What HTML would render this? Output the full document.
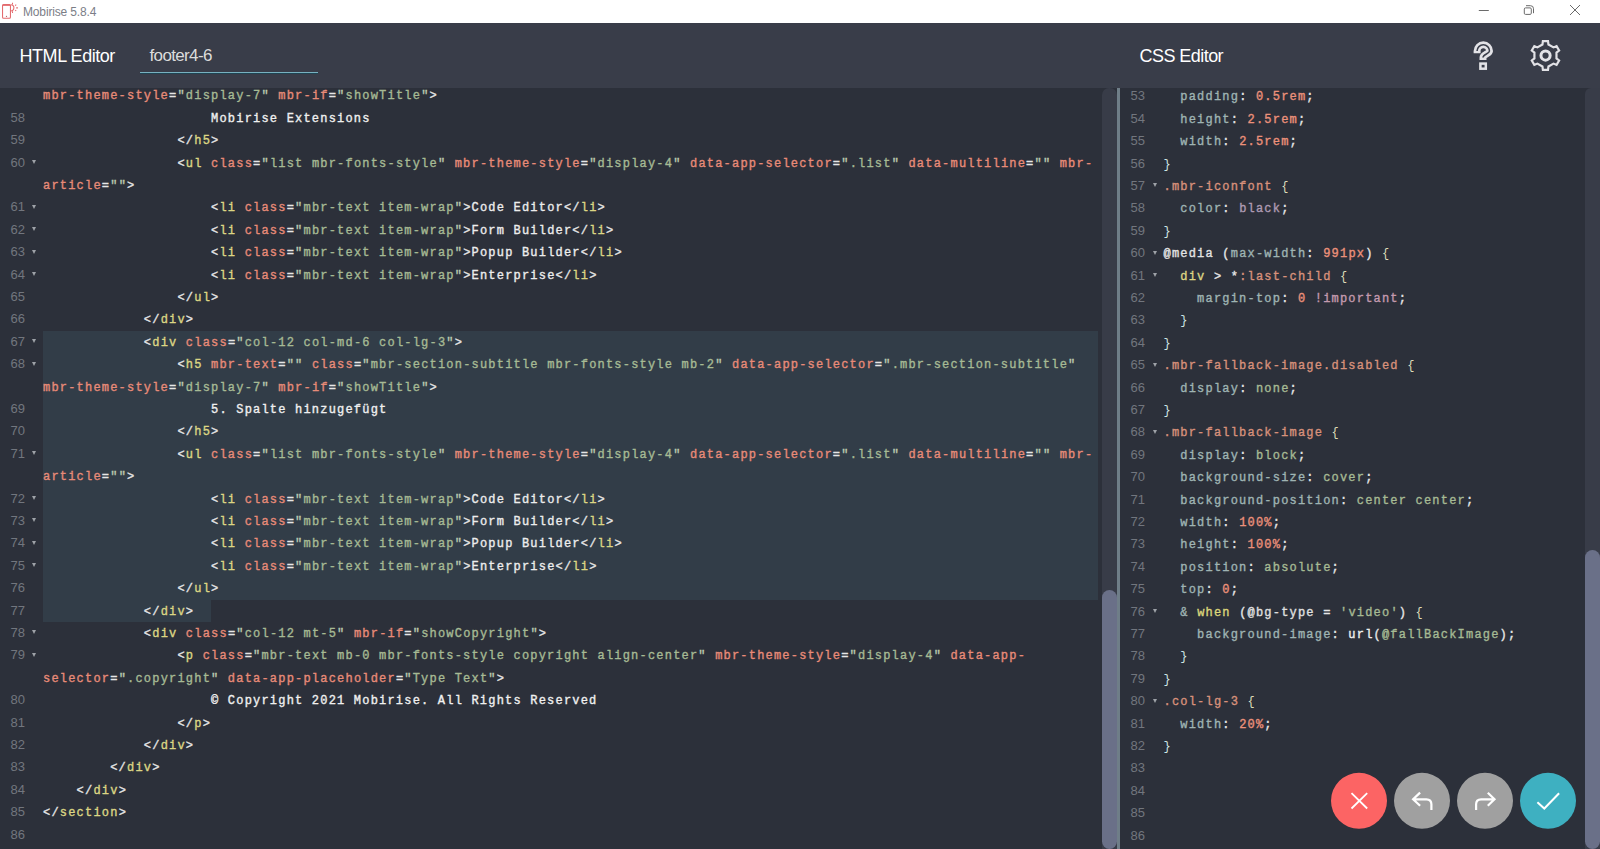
<!DOCTYPE html>
<html><head><meta charset="utf-8">
<style>
html,body{margin:0;padding:0;width:1600px;height:849px;overflow:hidden;background:#2c303a;}
body{position:relative;font-family:"Liberation Sans",sans-serif;}
.titlebar{position:absolute;left:0;top:0;width:1600px;height:23px;background:#fff;}
.titlebar .ttl{position:absolute;left:23px;top:4px;font-size:12px;letter-spacing:-0.15px;color:#7b7e87;line-height:16px;}
.header{position:absolute;left:0;top:23px;width:1600px;height:65px;background:#393d49;}
.htitle{position:absolute;color:#fff;font-size:18px;line-height:20px;}
.tabname{position:absolute;color:#dcdcdc;font-size:17px;line-height:20px;}
.tabline{position:absolute;left:140px;top:72px;width:178px;height:1px;background:#78b1c0;box-shadow:0 1px 0 rgba(25,70,85,0.8);}
.clip{position:absolute;top:88px;height:761px;overflow:hidden;}
.inner{position:absolute;top:-88px;left:0;width:1600px;height:849px;}
.row{position:absolute;margin-top:1px;height:22.4px;line-height:22.4px;white-space:pre;font-family:"Liberation Mono",monospace;font-size:12px;letter-spacing:1.2px;-webkit-text-stroke:0.35px currentColor;color:#e8e8e8;}
.ln{position:absolute;height:22.4px;line-height:22.4px;text-align:right;font-size:13px;color:#72767e;font-family:"Liberation Sans",sans-serif;}
.fold{position:absolute;width:0;height:0;border-left:2.6px solid transparent;border-right:2.6px solid transparent;border-top:4.2px solid #9ea2a8;}
.hl{position:absolute;background:#323d48;}
/* html tokens */
.p{color:#e6e6e6}
.t{color:#dcd684}
.a{color:#e88b78}
.s{color:#a6ba94}
.q{color:#bccab0}
.x{color:#ededed}
.w{color:#f0f0f0}
/* css tokens */
.pr{color:#9fb4b3}
.c{color:#e6e6e6}
.n{color:#ec917a}
.cb{color:#cfe6e4;-webkit-text-stroke:0}
.ob{color:#dedcb8;-webkit-text-stroke:0}
.sel{color:#d8917b}
.kw{color:#ae9bb3}
.at{color:#e4e4e4}
.imp{color:#c49aae}
.v{color:#a6ba94}
.amp{color:#9fb4b3}
.kw2{color:#dcd67a}
.var{color:#e0e0e0}
.fn{color:#f0f0f0}
.track{position:absolute;background:#383c48;}
.thumb{position:absolute;background:#6a7088;}
</style></head><body>
<div class="titlebar">
  <svg style="position:absolute;left:0;top:0" width="24" height="23" viewBox="0 0 24 23">
    <rect x="2.55" y="4.6" width="7.9" height="13.6" rx="1" fill="none" stroke="#e36a6d" stroke-width="1.05"/>
    <path d="M2.6 5.2H10.4" stroke="#e36a6d" stroke-width="1.3"/>
    <circle cx="6.5" cy="16.3" r="0.65" fill="#b05a60"/>
    <path d="M10.8 4.75A3.1 3.1 0 0 1 10.8 10.95" fill="none" stroke="#e36a6d" stroke-width="1.05"/>
    <path d="M12.5 2.8V4.5M15.2 5.7L16.2 4.7M16.2 7.85H17.9M15.2 10.0L16.2 11.0M12.5 11.3V13" stroke="#e36a6d" stroke-width="1.05" fill="none"/>
  </svg>
  <div class="ttl">Mobirise 5.8.4</div>
  <svg style="position:absolute;left:1470px;top:0" width="130" height="23" viewBox="0 0 130 23">
    <path d="M8.8 10.5h10" stroke="#6b6b6b" stroke-width="1" fill="none"/>
    <rect x="54.3" y="7.9" width="7" height="6.5" rx="1.2" fill="none" stroke="#6b6b6b" stroke-width="1"/>
    <path d="M56 5.7h4.5a3 3 0 0 1 3 3v4.5" stroke="#6b6b6b" stroke-width="1" fill="none"/>
    <path d="M100 5l10 10M110 5l-10 10" stroke="#6b6b6b" stroke-width="1" fill="none"/>
  </svg>
</div>
<div class="header">
  <div class="htitle" style="left:19.5px;top:22.6px;letter-spacing:-0.45px">HTML Editor</div>
  <div class="tabname" style="left:149.5px;top:22.8px;letter-spacing:-0.65px">footer4-6</div>
  <div class="tabline" style="top:49px"></div>
  <div class="htitle" style="left:1139.5px;top:22.6px;letter-spacing:-0.55px">CSS Editor</div>
</div>
<div class="clip" style="left:0;width:1102px">
 <div class="inner">
  <div class="hl" style="left:43px;top:330.8px;width:1055px;height:268.8px"></div>
  <div class="hl" style="left:43px;top:599.6px;width:168px;height:22.4px"></div>
<div class="row" style="top:84.40px;left:43px"><span class="a">mbr-theme-style</span><span class="p">=</span><span class="q">&quot;</span><span class="s">display-7</span><span class="q">&quot;</span> <span class="a">mbr-if</span><span class="p">=</span><span class="q">&quot;</span><span class="s">showTitle</span><span class="q">&quot;</span><span class="p">&gt;</span></div>
<div class="ln" style="top:106.80px;left:0;width:25px">58</div>
<div class="row" style="top:106.80px;left:43px">                    <span class="w">Mobirise Extensions</span></div>
<div class="ln" style="top:129.20px;left:0;width:25px">59</div>
<div class="row" style="top:129.20px;left:43px">                <span class="p">&lt;/</span><span class="t">h5</span><span class="p">&gt;</span></div>
<div class="ln" style="top:151.60px;left:0;width:25px">60</div>
<div class="fold" style="top:160.00px;left:31.8px"></div>
<div class="row" style="top:151.60px;left:43px">                <span class="p">&lt;</span><span class="t">ul</span> <span class="a">class</span><span class="p">=</span><span class="q">&quot;</span><span class="s">list mbr-fonts-style</span><span class="q">&quot;</span> <span class="a">mbr-theme-style</span><span class="p">=</span><span class="q">&quot;</span><span class="s">display-4</span><span class="q">&quot;</span> <span class="a">data-app-selector</span><span class="p">=</span><span class="q">&quot;</span><span class="s">.list</span><span class="q">&quot;</span> <span class="a">data-multiline</span><span class="p">=</span><span class="q">&quot;</span><span class="q">&quot;</span> <span class="a">mbr-</span></div>
<div class="row" style="top:174.00px;left:43px"><span class="a">article</span><span class="p">=</span><span class="q">&quot;</span><span class="q">&quot;</span><span class="p">&gt;</span></div>
<div class="ln" style="top:196.40px;left:0;width:25px">61</div>
<div class="fold" style="top:204.80px;left:31.8px"></div>
<div class="row" style="top:196.40px;left:43px">                    <span class="p">&lt;</span><span class="t">li</span> <span class="a">class</span><span class="p">=</span><span class="q">&quot;</span><span class="s">mbr-text item-wrap</span><span class="q">&quot;</span><span class="p">&gt;</span><span class="x">Code Editor</span><span class="p">&lt;/</span><span class="t">li</span><span class="p">&gt;</span></div>
<div class="ln" style="top:218.80px;left:0;width:25px">62</div>
<div class="fold" style="top:227.20px;left:31.8px"></div>
<div class="row" style="top:218.80px;left:43px">                    <span class="p">&lt;</span><span class="t">li</span> <span class="a">class</span><span class="p">=</span><span class="q">&quot;</span><span class="s">mbr-text item-wrap</span><span class="q">&quot;</span><span class="p">&gt;</span><span class="x">Form Builder</span><span class="p">&lt;/</span><span class="t">li</span><span class="p">&gt;</span></div>
<div class="ln" style="top:241.20px;left:0;width:25px">63</div>
<div class="fold" style="top:249.60px;left:31.8px"></div>
<div class="row" style="top:241.20px;left:43px">                    <span class="p">&lt;</span><span class="t">li</span> <span class="a">class</span><span class="p">=</span><span class="q">&quot;</span><span class="s">mbr-text item-wrap</span><span class="q">&quot;</span><span class="p">&gt;</span><span class="x">Popup Builder</span><span class="p">&lt;/</span><span class="t">li</span><span class="p">&gt;</span></div>
<div class="ln" style="top:263.60px;left:0;width:25px">64</div>
<div class="fold" style="top:272.00px;left:31.8px"></div>
<div class="row" style="top:263.60px;left:43px">                    <span class="p">&lt;</span><span class="t">li</span> <span class="a">class</span><span class="p">=</span><span class="q">&quot;</span><span class="s">mbr-text item-wrap</span><span class="q">&quot;</span><span class="p">&gt;</span><span class="x">Enterprise</span><span class="p">&lt;/</span><span class="t">li</span><span class="p">&gt;</span></div>
<div class="ln" style="top:286.00px;left:0;width:25px">65</div>
<div class="row" style="top:286.00px;left:43px">                <span class="p">&lt;/</span><span class="t">ul</span><span class="p">&gt;</span></div>
<div class="ln" style="top:308.40px;left:0;width:25px">66</div>
<div class="row" style="top:308.40px;left:43px">            <span class="p">&lt;/</span><span class="t">div</span><span class="p">&gt;</span></div>
<div class="ln" style="top:330.80px;left:0;width:25px">67</div>
<div class="fold" style="top:339.20px;left:31.8px"></div>
<div class="row" style="top:330.80px;left:43px">            <span class="p">&lt;</span><span class="t">div</span> <span class="a">class</span><span class="p">=</span><span class="q">&quot;</span><span class="s">col-12 col-md-6 col-lg-3</span><span class="q">&quot;</span><span class="p">&gt;</span></div>
<div class="ln" style="top:353.20px;left:0;width:25px">68</div>
<div class="fold" style="top:361.60px;left:31.8px"></div>
<div class="row" style="top:353.20px;left:43px">                <span class="p">&lt;</span><span class="t">h5</span> <span class="a">mbr-text</span><span class="p">=</span><span class="q">&quot;</span><span class="q">&quot;</span> <span class="a">class</span><span class="p">=</span><span class="q">&quot;</span><span class="s">mbr-section-subtitle mbr-fonts-style mb-2</span><span class="q">&quot;</span> <span class="a">data-app-selector</span><span class="p">=</span><span class="q">&quot;</span><span class="s">.mbr-section-subtitle</span><span class="q">&quot;</span></div>
<div class="row" style="top:375.60px;left:43px"><span class="a">mbr-theme-style</span><span class="p">=</span><span class="q">&quot;</span><span class="s">display-7</span><span class="q">&quot;</span> <span class="a">mbr-if</span><span class="p">=</span><span class="q">&quot;</span><span class="s">showTitle</span><span class="q">&quot;</span><span class="p">&gt;</span></div>
<div class="ln" style="top:398.00px;left:0;width:25px">69</div>
<div class="row" style="top:398.00px;left:43px">                    <span class="w">5. Spalte hinzugefügt</span></div>
<div class="ln" style="top:420.40px;left:0;width:25px">70</div>
<div class="row" style="top:420.40px;left:43px">                <span class="p">&lt;/</span><span class="t">h5</span><span class="p">&gt;</span></div>
<div class="ln" style="top:442.80px;left:0;width:25px">71</div>
<div class="fold" style="top:451.20px;left:31.8px"></div>
<div class="row" style="top:442.80px;left:43px">                <span class="p">&lt;</span><span class="t">ul</span> <span class="a">class</span><span class="p">=</span><span class="q">&quot;</span><span class="s">list mbr-fonts-style</span><span class="q">&quot;</span> <span class="a">mbr-theme-style</span><span class="p">=</span><span class="q">&quot;</span><span class="s">display-4</span><span class="q">&quot;</span> <span class="a">data-app-selector</span><span class="p">=</span><span class="q">&quot;</span><span class="s">.list</span><span class="q">&quot;</span> <span class="a">data-multiline</span><span class="p">=</span><span class="q">&quot;</span><span class="q">&quot;</span> <span class="a">mbr-</span></div>
<div class="row" style="top:465.20px;left:43px"><span class="a">article</span><span class="p">=</span><span class="q">&quot;</span><span class="q">&quot;</span><span class="p">&gt;</span></div>
<div class="ln" style="top:487.60px;left:0;width:25px">72</div>
<div class="fold" style="top:496.00px;left:31.8px"></div>
<div class="row" style="top:487.60px;left:43px">                    <span class="p">&lt;</span><span class="t">li</span> <span class="a">class</span><span class="p">=</span><span class="q">&quot;</span><span class="s">mbr-text item-wrap</span><span class="q">&quot;</span><span class="p">&gt;</span><span class="x">Code Editor</span><span class="p">&lt;/</span><span class="t">li</span><span class="p">&gt;</span></div>
<div class="ln" style="top:510.00px;left:0;width:25px">73</div>
<div class="fold" style="top:518.40px;left:31.8px"></div>
<div class="row" style="top:510.00px;left:43px">                    <span class="p">&lt;</span><span class="t">li</span> <span class="a">class</span><span class="p">=</span><span class="q">&quot;</span><span class="s">mbr-text item-wrap</span><span class="q">&quot;</span><span class="p">&gt;</span><span class="x">Form Builder</span><span class="p">&lt;/</span><span class="t">li</span><span class="p">&gt;</span></div>
<div class="ln" style="top:532.40px;left:0;width:25px">74</div>
<div class="fold" style="top:540.80px;left:31.8px"></div>
<div class="row" style="top:532.40px;left:43px">                    <span class="p">&lt;</span><span class="t">li</span> <span class="a">class</span><span class="p">=</span><span class="q">&quot;</span><span class="s">mbr-text item-wrap</span><span class="q">&quot;</span><span class="p">&gt;</span><span class="x">Popup Builder</span><span class="p">&lt;/</span><span class="t">li</span><span class="p">&gt;</span></div>
<div class="ln" style="top:554.80px;left:0;width:25px">75</div>
<div class="fold" style="top:563.20px;left:31.8px"></div>
<div class="row" style="top:554.80px;left:43px">                    <span class="p">&lt;</span><span class="t">li</span> <span class="a">class</span><span class="p">=</span><span class="q">&quot;</span><span class="s">mbr-text item-wrap</span><span class="q">&quot;</span><span class="p">&gt;</span><span class="x">Enterprise</span><span class="p">&lt;/</span><span class="t">li</span><span class="p">&gt;</span></div>
<div class="ln" style="top:577.20px;left:0;width:25px">76</div>
<div class="row" style="top:577.20px;left:43px">                <span class="p">&lt;/</span><span class="t">ul</span><span class="p">&gt;</span></div>
<div class="ln" style="top:599.60px;left:0;width:25px">77</div>
<div class="row" style="top:599.60px;left:43px">            <span class="p">&lt;/</span><span class="t">div</span><span class="p">&gt;</span></div>
<div class="ln" style="top:622.00px;left:0;width:25px">78</div>
<div class="fold" style="top:630.40px;left:31.8px"></div>
<div class="row" style="top:622.00px;left:43px">            <span class="p">&lt;</span><span class="t">div</span> <span class="a">class</span><span class="p">=</span><span class="q">&quot;</span><span class="s">col-12 mt-5</span><span class="q">&quot;</span> <span class="a">mbr-if</span><span class="p">=</span><span class="q">&quot;</span><span class="s">showCopyright</span><span class="q">&quot;</span><span class="p">&gt;</span></div>
<div class="ln" style="top:644.40px;left:0;width:25px">79</div>
<div class="fold" style="top:652.80px;left:31.8px"></div>
<div class="row" style="top:644.40px;left:43px">                <span class="p">&lt;</span><span class="t">p</span> <span class="a">class</span><span class="p">=</span><span class="q">&quot;</span><span class="s">mbr-text mb-0 mbr-fonts-style copyright align-center</span><span class="q">&quot;</span> <span class="a">mbr-theme-style</span><span class="p">=</span><span class="q">&quot;</span><span class="s">display-4</span><span class="q">&quot;</span> <span class="a">data-app-</span></div>
<div class="row" style="top:666.80px;left:43px"><span class="a">selector</span><span class="p">=</span><span class="q">&quot;</span><span class="s">.copyright</span><span class="q">&quot;</span> <span class="a">data-app-placeholder</span><span class="p">=</span><span class="q">&quot;</span><span class="s">Type Text</span><span class="q">&quot;</span><span class="p">&gt;</span></div>
<div class="ln" style="top:689.20px;left:0;width:25px">80</div>
<div class="row" style="top:689.20px;left:43px">                    <span class="w">© Copyright 2021 Mobirise. All Rights Reserved</span></div>
<div class="ln" style="top:711.60px;left:0;width:25px">81</div>
<div class="row" style="top:711.60px;left:43px">                <span class="p">&lt;/</span><span class="t">p</span><span class="p">&gt;</span></div>
<div class="ln" style="top:734.00px;left:0;width:25px">82</div>
<div class="row" style="top:734.00px;left:43px">            <span class="p">&lt;/</span><span class="t">div</span><span class="p">&gt;</span></div>
<div class="ln" style="top:756.40px;left:0;width:25px">83</div>
<div class="row" style="top:756.40px;left:43px">        <span class="p">&lt;/</span><span class="t">div</span><span class="p">&gt;</span></div>
<div class="ln" style="top:778.80px;left:0;width:25px">84</div>
<div class="row" style="top:778.80px;left:43px">    <span class="p">&lt;/</span><span class="t">div</span><span class="p">&gt;</span></div>
<div class="ln" style="top:801.20px;left:0;width:25px">85</div>
<div class="row" style="top:801.20px;left:43px"><span class="p">&lt;/</span><span class="t">section</span><span class="p">&gt;</span></div>
<div class="ln" style="top:823.60px;left:0;width:25px">86</div>
<div class="row" style="top:823.60px;left:43px"></div>
 </div>
</div>
<div class="track" style="left:1102px;top:88px;width:15px;height:761px;border-radius:7px 7px 0 0"></div>
<div class="thumb" style="left:1102px;top:590px;width:15px;height:259px;border-radius:7.5px"></div>
<div style="position:absolute;left:1117px;top:88px;width:3px;height:761px;background:#6f7e88"></div>
<div class="clip" style="left:1120px;width:465px">
 <div class="inner" style="left:-1120px">
<div class="ln" style="top:85.40px;left:1100px;width:45px">53</div>
<div class="row" style="top:85.40px;left:1163.5px">  <span class="pr">padding</span><span class="c">:</span> <span class="n">0.5rem</span><span class="c">;</span></div>
<div class="ln" style="top:107.80px;left:1100px;width:45px">54</div>
<div class="row" style="top:107.80px;left:1163.5px">  <span class="pr">height</span><span class="c">:</span> <span class="n">2.5rem</span><span class="c">;</span></div>
<div class="ln" style="top:130.20px;left:1100px;width:45px">55</div>
<div class="row" style="top:130.20px;left:1163.5px">  <span class="pr">width</span><span class="c">:</span> <span class="n">2.5rem</span><span class="c">;</span></div>
<div class="ln" style="top:152.60px;left:1100px;width:45px">56</div>
<div class="row" style="top:152.60px;left:1163.5px"><span class="cb">}</span></div>
<div class="ln" style="top:175.00px;left:1100px;width:45px">57</div>
<div class="fold" style="top:183.40px;left:1152.6px"></div>
<div class="row" style="top:175.00px;left:1163.5px"><span class="sel">.mbr-iconfont</span> <span class="ob">{</span></div>
<div class="ln" style="top:197.40px;left:1100px;width:45px">58</div>
<div class="row" style="top:197.40px;left:1163.5px">  <span class="pr">color</span><span class="c">:</span> <span class="kw">black</span><span class="c">;</span></div>
<div class="ln" style="top:219.80px;left:1100px;width:45px">59</div>
<div class="row" style="top:219.80px;left:1163.5px"><span class="cb">}</span></div>
<div class="ln" style="top:242.20px;left:1100px;width:45px">60</div>
<div class="fold" style="top:250.60px;left:1152.6px"></div>
<div class="row" style="top:242.20px;left:1163.5px"><span class="at">@media</span> <span class="c">(</span><span class="pr">max-width</span><span class="c">:</span> <span class="n">991px</span><span class="c">)</span> <span class="ob">{</span></div>
<div class="ln" style="top:264.60px;left:1100px;width:45px">61</div>
<div class="fold" style="top:273.00px;left:1152.6px"></div>
<div class="row" style="top:264.60px;left:1163.5px">  <span class="t">div</span> <span class="c">&gt;</span> <span class="c">*</span><span class="sel">:last-child</span> <span class="ob">{</span></div>
<div class="ln" style="top:287.00px;left:1100px;width:45px">62</div>
<div class="row" style="top:287.00px;left:1163.5px">    <span class="pr">margin-top</span><span class="c">:</span> <span class="n">0</span> <span class="imp">!important</span><span class="c">;</span></div>
<div class="ln" style="top:309.40px;left:1100px;width:45px">63</div>
<div class="row" style="top:309.40px;left:1163.5px">  <span class="cb">}</span></div>
<div class="ln" style="top:331.80px;left:1100px;width:45px">64</div>
<div class="row" style="top:331.80px;left:1163.5px"><span class="cb">}</span></div>
<div class="ln" style="top:354.20px;left:1100px;width:45px">65</div>
<div class="fold" style="top:362.60px;left:1152.6px"></div>
<div class="row" style="top:354.20px;left:1163.5px"><span class="sel">.mbr-fallback-image.disabled</span> <span class="ob">{</span></div>
<div class="ln" style="top:376.60px;left:1100px;width:45px">66</div>
<div class="row" style="top:376.60px;left:1163.5px">  <span class="pr">display</span><span class="c">:</span> <span class="v">none</span><span class="c">;</span></div>
<div class="ln" style="top:399.00px;left:1100px;width:45px">67</div>
<div class="row" style="top:399.00px;left:1163.5px"><span class="cb">}</span></div>
<div class="ln" style="top:421.40px;left:1100px;width:45px">68</div>
<div class="fold" style="top:429.80px;left:1152.6px"></div>
<div class="row" style="top:421.40px;left:1163.5px"><span class="sel">.mbr-fallback-image</span> <span class="ob">{</span></div>
<div class="ln" style="top:443.80px;left:1100px;width:45px">69</div>
<div class="row" style="top:443.80px;left:1163.5px">  <span class="pr">display</span><span class="c">:</span> <span class="v">block</span><span class="c">;</span></div>
<div class="ln" style="top:466.20px;left:1100px;width:45px">70</div>
<div class="row" style="top:466.20px;left:1163.5px">  <span class="pr">background-size</span><span class="c">:</span> <span class="v">cover</span><span class="c">;</span></div>
<div class="ln" style="top:488.60px;left:1100px;width:45px">71</div>
<div class="row" style="top:488.60px;left:1163.5px">  <span class="pr">background-position</span><span class="c">:</span> <span class="v">center center</span><span class="c">;</span></div>
<div class="ln" style="top:511.00px;left:1100px;width:45px">72</div>
<div class="row" style="top:511.00px;left:1163.5px">  <span class="pr">width</span><span class="c">:</span> <span class="n">100%</span><span class="c">;</span></div>
<div class="ln" style="top:533.40px;left:1100px;width:45px">73</div>
<div class="row" style="top:533.40px;left:1163.5px">  <span class="pr">height</span><span class="c">:</span> <span class="n">100%</span><span class="c">;</span></div>
<div class="ln" style="top:555.80px;left:1100px;width:45px">74</div>
<div class="row" style="top:555.80px;left:1163.5px">  <span class="pr">position</span><span class="c">:</span> <span class="v">absolute</span><span class="c">;</span></div>
<div class="ln" style="top:578.20px;left:1100px;width:45px">75</div>
<div class="row" style="top:578.20px;left:1163.5px">  <span class="pr">top</span><span class="c">:</span> <span class="n">0</span><span class="c">;</span></div>
<div class="ln" style="top:600.60px;left:1100px;width:45px">76</div>
<div class="fold" style="top:609.00px;left:1152.6px"></div>
<div class="row" style="top:600.60px;left:1163.5px">  <span class="amp">&amp;</span> <span class="kw2">when</span> <span class="c">(</span><span class="var">@bg-type</span> <span class="c">=</span> <span class="v">&#x27;video&#x27;</span><span class="c">)</span> <span class="ob">{</span></div>
<div class="ln" style="top:623.00px;left:1100px;width:45px">77</div>
<div class="row" style="top:623.00px;left:1163.5px">    <span class="pr">background-image</span><span class="c">:</span> <span class="fn">url</span><span class="c">(</span><span class="v">@fallBackImage</span><span class="c">)</span><span class="c">;</span></div>
<div class="ln" style="top:645.40px;left:1100px;width:45px">78</div>
<div class="row" style="top:645.40px;left:1163.5px">  <span class="cb">}</span></div>
<div class="ln" style="top:667.80px;left:1100px;width:45px">79</div>
<div class="row" style="top:667.80px;left:1163.5px"><span class="cb">}</span></div>
<div class="ln" style="top:690.20px;left:1100px;width:45px">80</div>
<div class="fold" style="top:698.60px;left:1152.6px"></div>
<div class="row" style="top:690.20px;left:1163.5px"><span class="sel">.col-lg-3</span> <span class="ob">{</span></div>
<div class="ln" style="top:712.60px;left:1100px;width:45px">81</div>
<div class="row" style="top:712.60px;left:1163.5px">  <span class="pr">width</span><span class="c">:</span> <span class="n">20%</span><span class="c">;</span></div>
<div class="ln" style="top:735.00px;left:1100px;width:45px">82</div>
<div class="row" style="top:735.00px;left:1163.5px"><span class="cb">}</span></div>
<div class="ln" style="top:757.40px;left:1100px;width:45px">83</div>
<div class="row" style="top:757.40px;left:1163.5px"></div>
<div class="ln" style="top:779.80px;left:1100px;width:45px">84</div>
<div class="row" style="top:779.80px;left:1163.5px"></div>
<div class="ln" style="top:802.20px;left:1100px;width:45px">85</div>
<div class="row" style="top:802.20px;left:1163.5px"></div>
<div class="ln" style="top:824.60px;left:1100px;width:45px">86</div>
<div class="row" style="top:824.60px;left:1163.5px"></div>
 </div>
</div>
<div class="track" style="left:1584.5px;top:88px;width:20px;height:761px;border-radius:6px 0 0 0"></div>
<div class="thumb" style="left:1585px;top:550px;width:15px;height:299px;border-radius:7.5px"></div>
<!-- buttons -->
<svg style="position:absolute;left:1320px;top:760px" width="270" height="89" viewBox="1320 760 270 89">
  <circle cx="1359" cy="800.8" r="28" fill="#fc6464"/>
  <circle cx="1422" cy="800.8" r="28" fill="#a0a0a0"/>
  <circle cx="1485" cy="800.8" r="28" fill="#a0a0a0"/>
  <circle cx="1548" cy="800.8" r="28" fill="#3eb0c1"/>
  <path d="M1351.5 793.1L1367.2 808.5M1367.2 793.1L1351.5 808.5" stroke="#fff" stroke-width="1.8" fill="none"/>
  <path d="M1420.1 792.6L1413.1 799.3L1420.1 805.8M1413.1 799.3H1426.4Q1431.4 799.3 1431.4 804.3V809.9" stroke="#fff" stroke-width="2.2" fill="none"/>
  <path d="M1487.8 792.8L1494.5 799.3L1487.8 805.8M1494.5 799.3H1481.1Q1476.1 799.3 1476.1 804.3V809.9" stroke="#fff" stroke-width="2.2" fill="none"/>
  <path d="M1537.4 802.3L1544.3 808.5L1559.1 793.3" stroke="#fff" stroke-width="2" fill="none"/>
</svg>
<!-- header icons -->
<svg style="position:absolute;left:1460px;top:30px" width="120" height="50" viewBox="1460 30 120 50">
  <path d="M1477.1 53.2V51A6.2 6.2 0 0 1 1489.5 51C1489.5 53.6 1483 54.5 1483 57.5V60" stroke="#e2e2e6" stroke-width="7.0" fill="none"/>
  <path d="M1477.1 50.2V51A6.2 6.2 0 0 1 1489.5 51C1489.5 53.6 1483 54.5 1483 57.5V57" stroke="#393d49" stroke-width="1.5" fill="none"/>
  <rect x="1480.4" y="63.6" width="5.4" height="5.1" fill="none" stroke="#e2e2e6" stroke-width="2.5"/>
  <path d="M1542.45 44.50 L1542.90 41.20 L1548.00 41.20 L1548.45 44.50 L1553.48 47.40 L1556.56 46.14 L1559.11 50.56 L1556.48 52.60 L1556.48 58.40 L1559.11 60.44 L1556.56 64.86 L1553.48 63.60 L1548.45 66.50 L1548.00 69.80 L1542.90 69.80 L1542.45 66.50 L1537.42 63.60 L1534.34 64.86 L1531.79 60.44 L1534.42 58.40 L1534.42 52.60 L1531.79 50.56 L1534.34 46.14 L1537.42 47.40Z" stroke="#e2e2e6" stroke-width="2.2" fill="none" stroke-linejoin="miter"/>
  <circle cx="1545.55" cy="55.55" r="4.6" stroke="#e2e2e6" stroke-width="3" fill="none"/>
</svg>
</body></html>
